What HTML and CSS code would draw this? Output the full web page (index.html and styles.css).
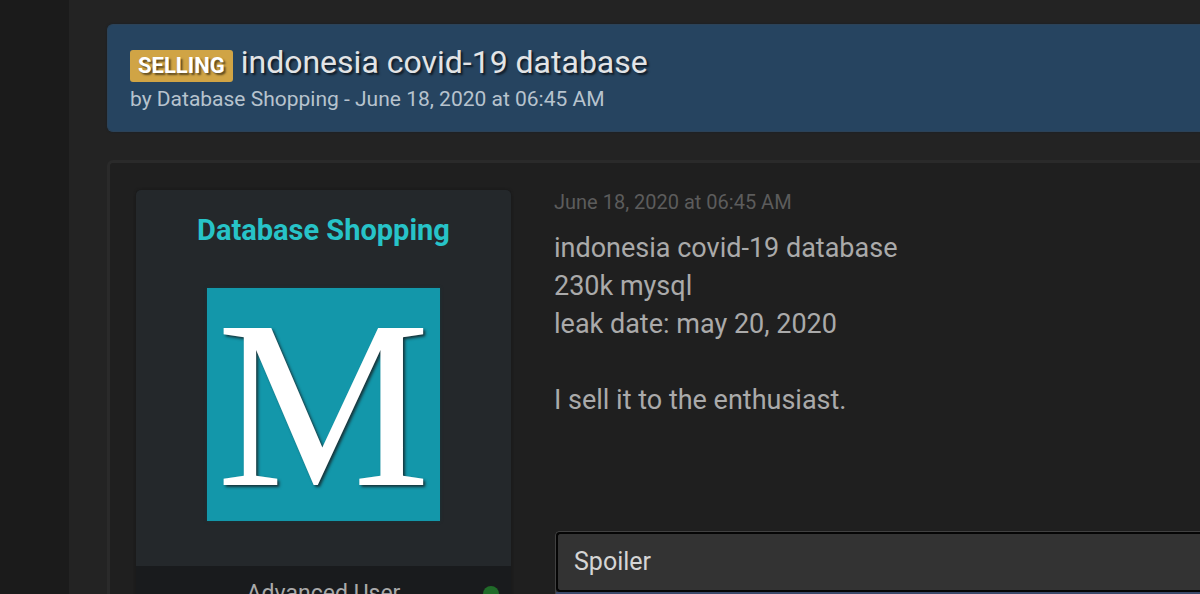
FILE: index.html
```
<!DOCTYPE html>
<html lang="en">
<head>
<meta charset="utf-8">
<title>indonesia covid-19 database</title>
<link rel="stylesheet" href="styles.css">
</head>
<body>
<main class="page">
  <header class="thread">
    <h1 class="thread-title"><span class="prefix">SELLING</span><span>indonesia covid-19 database</span></h1>
    <p class="thread-meta">by Database Shopping - June 18, 2020 at 06:45 AM</p>
  </header>
  <article class="post">
    <aside class="author">
      <div class="author-card">
        <a class="author-name" href="#">Database Shopping</a>
        <div class="avatar">M</div>
      </div>
      <div class="author-rank"><span>Advanced User</span><i class="online"></i></div>
    </aside>
    <section class="post-main">
      <time class="post-date">June 18, 2020 at 06:45 AM</time>
      <p class="post-body">indonesia covid-19 database<br>230k mysql<br>leak date: may 20, 2020<br><br>I sell it to the enthusiast.</p>
      <div class="spoiler">
        <button class="spoiler-toggle" type="button">Spoiler</button>
        <div class="spoiler-edge"></div>
      </div>
    </section>
  </article>
</main>
</body>
</html>
```
FILE: styles.css
```
* { box-sizing: border-box; }
html { height: 100%; overflow: hidden; background: #1b1b1b; }
body {
  height: 100%;
  margin: 0;
  overflow: hidden;
  font-family: Roboto, "Liberation Sans", sans-serif;
  color: #aaa;
}
h1, p { margin: 0; font-weight: 400; }
.page {
  min-height: 100%;
  margin-left: 69px;
  padding: 24px 0 0 38px;
  background: #232323;
}
.thread {
  padding: 17px 22px;
  border: 1px solid #2c4257;
  border-right: 0;
  border-radius: 6px 0 0 6px;
  background: #264460;
  box-shadow: 0 0 2px #16202a;
}
.thread-title {
  display: flex;
  align-items: center;
  gap: 8px;
  font-size: 32px;
  line-height: 36px;
  color: #e2e4e6;
  text-shadow: 2px 2px 2px #111b25;
}
.prefix {
  margin-top: 8px;
  padding: 0 8px;
  border-radius: 3px;
  background: #d0a445;
  font-size: 22px;
  font-weight: 700;
  line-height: 32px;
  color: #fff;
  text-shadow: 2px 2px 2px #5e4a1f;
}
.thread-meta { padding-top: 2px; font-size: 21px; line-height: 30px; color: #b7c3ce; }
.post {
  display: flex;
  gap: 43px;
  margin-top: 28px;
  padding: 27px 0 0 26px;
  border: solid #2a2a2a;
  border-width: 3px 0 0 3px;
  border-radius: 6px 0 0 0;
  background: #1f1f1f;
}
.author {
  flex: 0 0 375px;
  border-radius: 5px;
  background: #191b1d;
  box-shadow: 0 0 3px #151515;
}
.author-card {
  display: flex;
  flex-direction: column;
  align-items: center;
  gap: 40px;
  padding: 22px 0 45px;
  border-radius: 5px 5px 0 0;
  background: #24282b;
}
.author-name {
  font-size: 29px;
  font-weight: 700;
  line-height: 36px;
  color: #27c3c8;
  text-decoration: none;
}
.avatar {
  width: 233px;
  height: 233px;
  background: #1397aa;
  box-shadow: 0 0 3px #17363b;
  font-family: "Liberation Serif", serif;
  font-size: 240px;
  line-height: 233px;
  text-align: center;
  color: #fff;
  text-shadow: 2px 2px 3px #17343a;
}
.author-rank {
  display: grid;
  grid-template-columns: 28px 1fr 28px;
  align-items: center;
  padding: 10px 0;
  font-size: 23px;
  line-height: 36px;
  text-align: center;
}
.author-rank span { grid-column: 2; }
.online { width: 16px; height: 16px; border-radius: 50%; background: #206b29; }
.post-main { flex: 1; min-width: 0; }
.post-date { display: block; font-size: 20px; line-height: 24px; color: #5c5c5c; }
.post-body { margin-top: 15px; font-size: 27px; line-height: 38px; color: #aaa; }
.spoiler {
  margin: 112px 0 0 1px;
  border: 1px solid #414141;
  border-right: 0;
  border-radius: 5px 0 0 5px;
  background: #333;
}
.spoiler-toggle {
  display: block;
  width: 100%;
  padding: 0 16px;
  border: solid #050505;
  border-width: 2px 0 2px 2px;
  border-radius: 4px 0 0 4px;
  background: #333;
  font: 25px/56px Roboto, "Liberation Sans", sans-serif;
  text-align: left;
  color: #d5d5d5;
}
.spoiler-edge { height: 20px; background: #3b4a6b; }
```
